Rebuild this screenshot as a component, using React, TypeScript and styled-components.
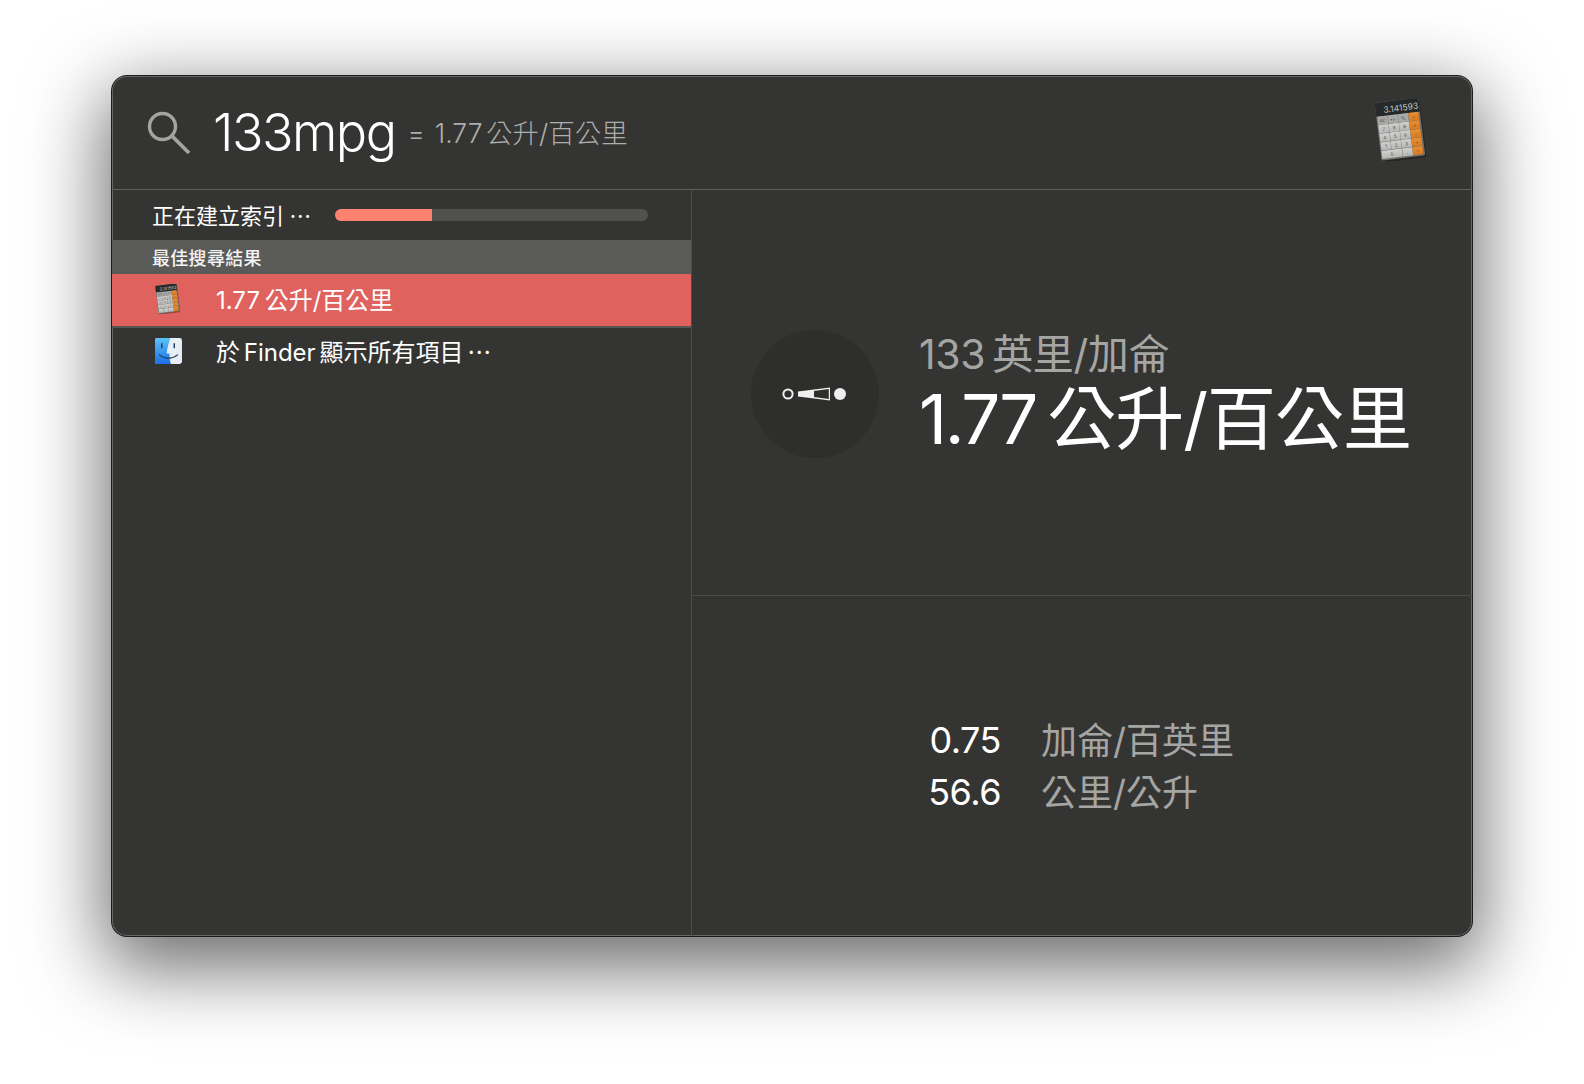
import { createGlobalStyle, styled } from 'styled-components';

const FONT = `Inter, "Noto Sans CJK TC", sans-serif`;

const GlobalStyle = createGlobalStyle`
  html, body {
    margin: 0;
    padding: 0;
    background: #fff;
    overflow: hidden;
  }
`;

const KEY_LABELS = [
  ['AC', '+/-', '%', '÷'],
  ['7', '8', '9', '×'],
  ['4', '5', '6', '−'],
  ['1', '2', '3', '+'],
  ['0', '', '.', '='],
];

function SearchIcon() {
  return (
    <svg width="46" height="46" viewBox="0 0 46 46" fill="none" stroke="#a3a3a1" strokeWidth="3.4">
      <circle cx="16.5" cy="16.5" r="13" />
      <path d="M26 26 L43 43" strokeWidth="3.8" />
    </svg>
  );
}

function CalculatorIcon({ size, id }: { size: number; id: string }) {
  const keys = [];
  KEY_LABELS.forEach((row, r) => {
    row.forEach((label, c) => {
      if (r === 4 && c === 1) return;
      const orange = c === 3;
      const wide = r === 4 && c === 0;
      const w = wide ? 20.5 : 10.1;
      const x = 3 + c * 10.4;
      const y = 15 + r * 8.6;
      keys.push(
        <g key={`${r}-${c}`}>
          <rect
            x={x}
            y={y}
            width={w}
            height="8.2"
            fill={orange ? `url(#${id}-orange)` : r === 0 ? '#a9a9a7' : `url(#${id}-key)`}
          />
          <text
            x={x + w / 2}
            y={y + 6}
            fontSize="4.6"
            textAnchor="middle"
            fill={orange ? '#7d4311' : '#4a4a49'}
            fontFamily="Inter, sans-serif"
          >
            {label}
          </text>
        </g>,
      );
    });
  });
  return (
    <svg width={size} height={size} viewBox="0 0 50 62">
      <defs>
        <linearGradient id={`${id}-key`} x1="0" y1="0" x2="0" y2="1">
          <stop offset="0" stopColor="#d0d0ce" />
          <stop offset="1" stopColor="#b6b6b4" />
        </linearGradient>
        <linearGradient id={`${id}-orange`} x1="0" y1="0" x2="0" y2="1">
          <stop offset="0" stopColor="#ea8e30" />
          <stop offset="1" stopColor="#d67a22" />
        </linearGradient>
      </defs>
      <g transform="rotate(-7 25 31)">
        <rect x="3" y="4" width="44" height="57" rx="1.5" fill="#000" opacity="0.3" />
        <rect x="2" y="1" width="44" height="58" rx="1.5" fill="#6f6f6e" />
        <rect x="2" y="1" width="44" height="14" rx="1" fill="#25292a" />
        <text x="45" y="12" fontSize="8.6" textAnchor="end" fill="#c4c7c7" fontFamily="Inter, sans-serif">
          3.141593
        </text>
        {keys}
      </g>
    </svg>
  );
}

function FinderIcon() {
  return (
    <svg width="27" height="26" viewBox="0 0 28 27">
      <defs>
        <linearGradient id="finderBlue" x1="0" y1="0" x2="0" y2="1">
          <stop offset="0" stopColor="#5cc3f8" />
          <stop offset="1" stopColor="#1c6fe6" />
        </linearGradient>
      </defs>
      <rect width="28" height="27" rx="2.5" fill="#e8eef6" />
      <path
        d="M2.5 0 H16 C14 6 12.5 11 12.2 16 H15 C15 20 15.5 24 16.5 27 H2.5 A2.5 2.5 0 0 1 0 24.5 V2.5 A2.5 2.5 0 0 1 2.5 0 Z"
        fill="url(#finderBlue)"
      />
      <path d="M7 6 V10 M20 6 V10" stroke="#1d3c62" strokeWidth="1.5" strokeLinecap="round" />
      <path d="M4.5 17.5 C10 22 18 22 23.5 17.5" stroke="#1d3c62" strokeWidth="1.2" fill="none" strokeLinecap="round" />
    </svg>
  );
}

function ConversionGlyph() {
  return (
    <svg width="66" height="14" viewBox="0 0 66 14">
      <circle cx="6" cy="7" r="4.6" fill="none" stroke="#efefef" strokeWidth="2" />
      <path d="M16 4.5 L48 0.5 V13.5 L16 9.5 Z" fill="#efefef" />
      <path d="M32 4 L46.8 2 V12 L32 10 Z" fill="#2e2e2d" />
      <circle cx="58" cy="7" r="6" fill="#efefef" />
    </svg>
  );
}

export default function App() {
  return (
    <Page>
      <GlobalStyle />
      <SpotlightWindow>
        <SearchBar>
          <SearchIcon />
          <Query>133mpg</Query>
          <InlineResult>
            <Equals>=</Equals>1.77 公升/百公里
          </InlineResult>
          <TopIcon>
            <CalculatorIcon size={62} id="top" />
          </TopIcon>
        </SearchBar>
        <Body>
          <ResultsPane>
            <IndexRow>
              <IndexLabel>正在建立索引 ⋯</IndexLabel>
              <ProgressTrack>
                <ProgressFill />
              </ProgressTrack>
            </IndexRow>
            <CategoryHeader>最佳搜尋結果</CategoryHeader>
            <ResultRow $selected>
              <RowIcon>
                <CalculatorIcon size={30} id="row" />
              </RowIcon>
              1.77 公升/百公里
            </ResultRow>
            <ResultRow>
              <RowIcon $inset={43}>
                <FinderIcon />
              </RowIcon>
              於 Finder 顯示所有項目 ⋯
            </ResultRow>
          </ResultsPane>
          <DetailPane>
            <DetailTop>
              <GlyphCircle>
                <ConversionGlyph />
              </GlyphCircle>
              <Conversion>
                <ConversionFrom>133 英里/加侖</ConversionFrom>
                <ConversionTo>
                  <TightDigits>1.77</TightDigits> 公升/百公里
                </ConversionTo>
              </Conversion>
            </DetailTop>
            <DetailBottom>
              <UnitTable>
                <UnitValue>0.75</UnitValue>
                <UnitName>加侖/百英里</UnitName>
                <UnitValue>56.6</UnitValue>
                <UnitName>公里/公升</UnitName>
              </UnitTable>
            </DetailBottom>
          </DetailPane>
        </Body>
      </SpotlightWindow>
    </Page>
  );
}

const Page = styled.div`
  width: 1584px;
  height: 1084px;
  padding: 76px 112px 148px;
  box-sizing: border-box;
  font-family: ${FONT};
`;

const SpotlightWindow = styled.div`
  height: 100%;
  display: flex;
  flex-direction: column;
  background: #343433;
  border-radius: 15px;
  box-shadow:
    inset 0 0 0 1px #666665,
    0 0 0 1px #1c1c1c,
    0 24px 76px 8px rgba(0, 0, 0, 0.58);
  overflow: hidden;
`;

const SearchBar = styled.div`
  height: 113px;
  flex: none;
  display: flex;
  align-items: center;
  padding: 0 40px 0 34px;
  border-bottom: 1px solid #5f5f5e;
`;

const Query = styled.div`
  margin-left: 21px;
  font-size: 52px;
  font-weight: 300;
  letter-spacing: -1.5px;
  color: #fff;
`;

const InlineResult = styled.div`
  margin-left: 12px;
  margin-top: -2px;
  font-size: 26.5px;
  font-weight: 300;
  color: #aeaeac;
  word-spacing: -4px;
`;

const Equals = styled.span`
  margin-right: 10px;
`;

const TopIcon = styled.div`
  margin-left: auto;
  margin-bottom: 5px;
  display: flex;
`;

const Body = styled.div`
  flex: 1;
  display: flex;
  min-height: 0;
`;

const ResultsPane = styled.div`
  width: 579px;
  flex: none;
  border-right: 1px solid #4c4c4b;
`;

const IndexRow = styled.div`
  height: 50px;
  display: flex;
  align-items: center;
  padding-left: 40px;
`;

const IndexLabel = styled.div`
  width: 183px;
  padding-bottom: 2px;
  font-size: 22px;
  color: #fff;
  word-spacing: -1px;
`;

const ProgressTrack = styled.div`
  width: 313px;
  height: 12px;
  border-radius: 6px;
  background: #515150;
  overflow: hidden;
`;

const ProgressFill = styled.div`
  width: 31%;
  height: 100%;
  background: #fd8270;
`;

const CategoryHeader = styled.div`
  height: 34px;
  display: flex;
  align-items: center;
  padding-left: 40px;
  box-sizing: border-box;
  background: #5a5a59;
  font-size: 18px;
  font-weight: 500;
  letter-spacing: 0.3px;
  color: #f4f4f4;
`;

const ResultRow = styled.div<{ $selected?: boolean }>`
  height: ${(p) => (p.$selected ? '54px' : '50px')};
  display: flex;
  align-items: center;
  padding-bottom: ${(p) => (p.$selected ? '3px' : '5px')};
  box-sizing: border-box;
  font-size: 24px;
  color: #fff;
  word-spacing: ${(p) => (p.$selected ? '-2px' : '-3px')};
  background: ${(p) => (p.$selected ? '#df625e' : 'transparent')};
  border-bottom: ${(p) => (p.$selected ? '2px solid #565655' : 'none')};
`;

const RowIcon = styled.div<{ $inset?: number }>`
  width: 104px;
  padding-left: ${(p) => p.$inset ?? 41}px;
  box-sizing: border-box;
  display: flex;
  flex: none;
`;

const DetailPane = styled.div`
  flex: 1;
  display: flex;
  flex-direction: column;
`;

const DetailTop = styled.div`
  height: 406px;
  flex: none;
  display: flex;
  align-items: center;
  padding: 0 0 0 59px;
  box-sizing: border-box;
  border-bottom: 1px solid #4c4c4b;
`;

const GlyphCircle = styled.div`
  width: 128px;
  height: 128px;
  flex: none;
  margin-top: 3px;
  border-radius: 50%;
  background: #2e2e2d;
  display: flex;
  align-items: center;
  justify-content: center;
`;

const Conversion = styled.div`
  margin: 2px 0 0 40px;
  display: flex;
  flex-direction: column;
`;

const ConversionFrom = styled.div`
  font-size: 41px;
  line-height: 48px;
  font-weight: 400;
  color: #a5a5a3;
  letter-spacing: -0.4px;
  word-spacing: -4px;
`;

const ConversionTo = styled.div`
  margin-top: 2px;
  font-size: 69px;
  line-height: 78px;
  font-weight: 400;
  color: #fff;
  letter-spacing: -1px;
  word-spacing: -7px;
`;

const TightDigits = styled.span`
  letter-spacing: -2.4px;
`;

const DetailBottom = styled.div`
  flex: 1;
  padding: 118px 0 0 219px;
  box-sizing: border-box;
`;

const UnitTable = styled.div`
  display: grid;
  grid-template-columns: 90px auto;
  column-gap: 40px;
  justify-content: start;
  grid-auto-rows: 52px;
  align-items: center;
  font-size: 36px;
`;

const UnitValue = styled.div`
  text-align: right;
  color: #fff;
  letter-spacing: -0.5px;
`;

const UnitName = styled.div`
  padding-bottom: 5px;
  color: #a5a5a3;
  font-weight: 400;
`;
